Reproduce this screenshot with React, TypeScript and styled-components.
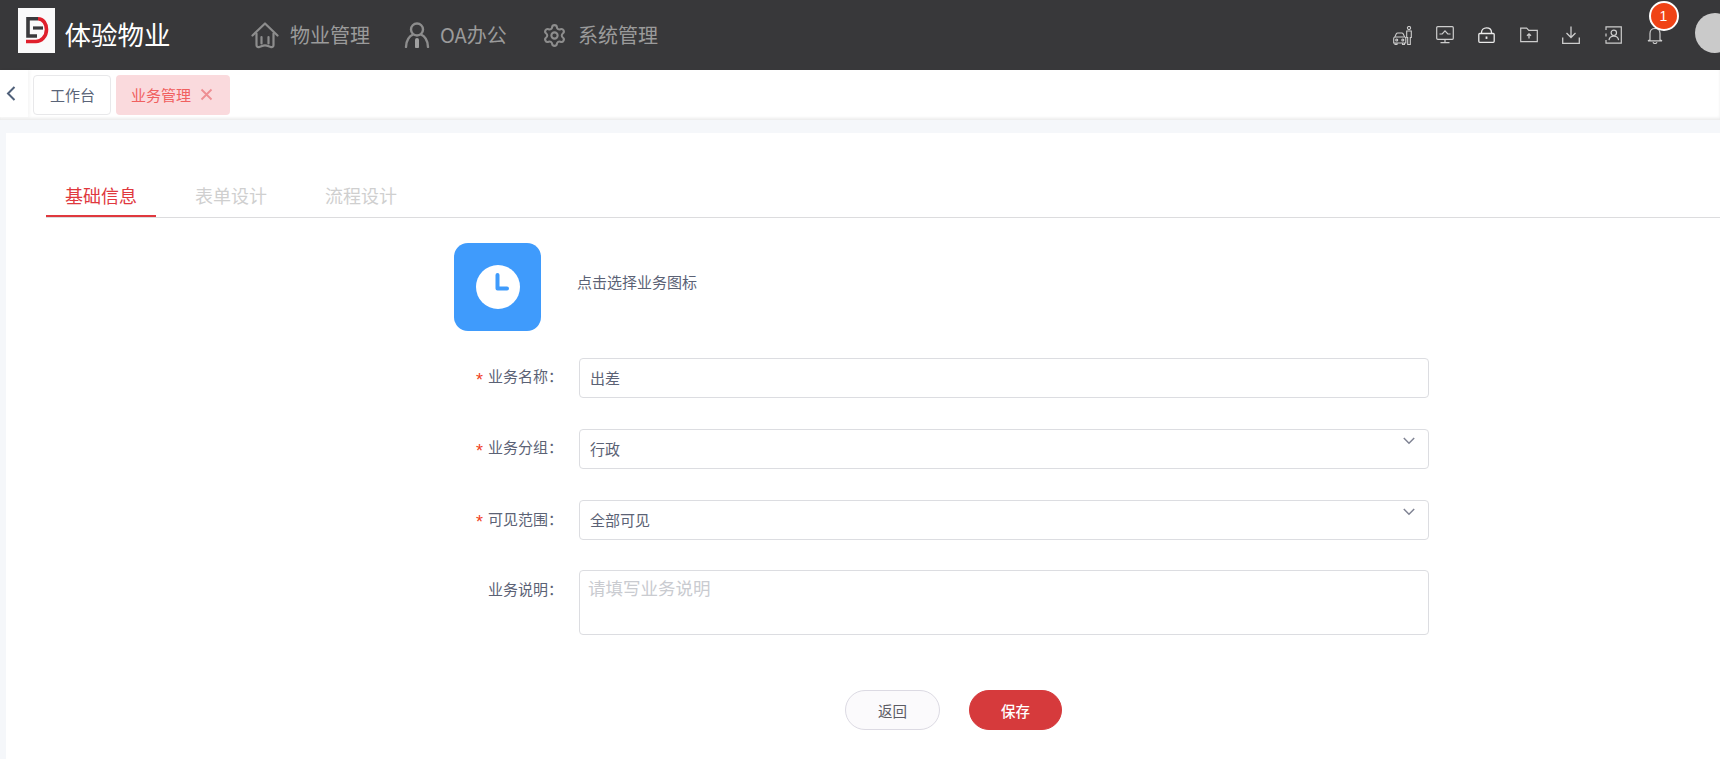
import React from "react";
import styled, { createGlobalStyle } from "styled-components";
import { Settings } from "lucide-react";

const Global = createGlobalStyle`
  html, body { margin: 0; padding: 0; height: 759px; overflow: hidden; background: #f5f7fa; }
  body, input, textarea { font-family: "Noto Sans CJK SC", "Liberation Sans", sans-serif; }
  * { box-sizing: border-box; }
`;

const Page = styled.div`
  display: flex;
  flex-direction: column;
  width: 1720px;
  height: 759px;
  overflow: hidden;
`;

const Header = styled.header`
  display: flex;
  align-items: center;
  flex: none;
  height: 70px;
  padding-left: 18px;
  background: #38383a;
`;

const LogoBox = styled.div`
  display: flex;
  flex: none;
  width: 37px;
  height: 45px;
  margin-top: -9px;
  background: #fafafa;
`;

const Title = styled.div`
  width: 186.5px;
  margin: -3px 0 0 9.5px;
  flex: none;
  color: #fff;
  font-size: 26.5px;
  line-height: 36px;
`;

const Nav = styled.nav`
  display: flex;
  align-items: center;
`;

const NavItem = styled.div<{ $w: number; $gap: number }>`
  display: flex;
  align-items: center;
  gap: ${(p) => p.$gap}px;
  width: ${(p) => p.$w}px;
  color: #9b9b9b;
  font-size: 20px;
  line-height: 28px;
`;

const Tools = styled.div`
  display: flex;
  align-items: center;
  margin-left: auto;
  margin-right: -15px;
`;

const ToolCell = styled.div`
  position: relative;
  display: flex;
  justify-content: center;
  align-items: center;
  width: 42px;
  height: 42px;
  color: #cdcdcd;
`;

const Badge = styled.span`
  position: absolute;
  left: 15px;
  top: -13px;
  display: flex;
  align-items: center;
  justify-content: center;
  width: 30px;
  height: 30px;
  border: 2px solid #fff;
  border-radius: 50%;
  background: #f04316;
  color: #fff;
  font-family: "Liberation Sans", sans-serif;
  font-size: 14px;
`;

const Avatar = styled.div`
  flex: none;
  width: 40px;
  height: 40px;
  margin-left: 19.5px;
  margin-top: -4px;
  border-radius: 50%;
  background: #cacaca;
`;

const TabBar = styled.div`
  position: relative;
  display: flex;
  align-items: center;
  flex: none;
  gap: 5px;
  height: 50px;
  background: #fff;
  box-shadow: 0 -2px 3px rgba(0, 0, 0, 0.08) inset;
`;

const BackCell = styled.div`
  display: flex;
  align-items: center;
  justify-content: center;
  width: 28px;
  height: 47px;
  margin-top: -3px;
  padding-right: 6px;
  background: #fff;
  box-shadow: 2px 0 3px rgba(0, 0, 0, 0.04);
`;

const PageTab = styled.div<{ $active?: boolean }>`
  display: flex;
  align-items: center;
  gap: 9px;
  height: 40px;
  padding: 0 0 2px ${(p) => (p.$active ? "15px" : "16px")};
  border: ${(p) => (p.$active ? "none" : "1px solid #e8e8ea")};
  border-radius: 4px;
  background: ${(p) => (p.$active ? "#fadadd" : "#fff")};
  color: ${(p) => (p.$active ? "#f0605f" : "#5a6478")};
  font-size: 15px;
  white-space: nowrap;
  width: ${(p) => (p.$active ? "114px" : "78px")};
`;

const Card = styled.main`
  flex: 1;
  margin: 13px 0 0 6px;
  padding: 42px 0 0 40px;
  background: #fff;
`;

const SectionTabs = styled.div`
  display: flex;
  gap: 20px;
  border-bottom: 1px solid #dcdcde;
  height: 43px;
`;

const SectionTab = styled.div<{ $active?: boolean }>`
  display: flex;
  align-items: center;
  justify-content: center;
  width: 110px;
  height: 42px;
  border-bottom: 2px solid ${(p) => (p.$active ? "#e0383e" : "transparent")};
  color: ${(p) => (p.$active ? "#e0383e" : "#cfcfcf")};
  font-size: 18px;
`;

const Form = styled.form`
  display: flex;
  flex-direction: column;
  width: 975px;
  margin: 25px 0 0 408px;
`;

const IconRow = styled.div`
  display: flex;
  align-items: center;
  margin-bottom: 27px;
`;

const AppIcon = styled.div`
  display: flex;
  align-items: center;
  justify-content: center;
  width: 87px;
  height: 88px;
  border-radius: 14px;
  background: #3f9bfc;
`;

const IconHint = styled.div`
  margin: -12px 0 0 36px;
  color: #5b6275;
  font-size: 15px;
`;

const Row = styled.div<{ $gap: number }>`
  display: flex;
  align-items: flex-start;
  margin-bottom: ${(p) => p.$gap}px;
`;

const Label = styled.label<{ $h?: number }>`
  display: flex;
  justify-content: flex-end;
  align-items: center;
  flex: none;
  width: 109px;
  height: ${(p) => p.$h ?? 35}px;
  margin-right: 16px;
  color: #5b6275;
  font-size: 15px;
`;

const Star = styled.span`
  margin-right: 5px;
  color: #f0411d;
  font-size: 18px;
  font-family: "Liberation Sans", sans-serif;
  line-height: 14px;
  padding-top: 8px;
`;

const TextInput = styled.input`
  flex: 1;
  height: 40px;
  padding: 0 10px 2px;
  border: 1px solid #dcdde1;
  border-radius: 4px;
  outline: none;
  background: #fff;
  color: #5b6275;
  font-size: 15px;
`;

const SelectBox = styled.div`
  display: flex;
  justify-content: space-between;
  align-items: flex-start;
  flex: 1;
  height: 40px;
  padding: 0 13px 0 10px;
  border: 1px solid #dcdde1;
  border-radius: 4px;
  color: #5b6275;
  font-size: 15px;
  line-height: 37px;
`;

const Caret = styled.svg`
  margin-top: 7px;
`;

const TextArea = styled.textarea`
  flex: 1;
  height: 65px;
  padding: 5px 8px;
  border: 1px solid #dcdde1;
  border-radius: 4px;
  outline: none;
  resize: none;
  color: #5b6275;
  font-size: 17.5px;
  line-height: 24px;
  &::placeholder {
    color: #c9cbd0;
    opacity: 1;
  }
`;

const Actions = styled.div`
  display: flex;
  gap: 29px;
  margin: 24px 0 0 391px;
`;

const Button = styled.button<{ $primary?: boolean }>`
  width: ${(p) => (p.$primary ? "93px" : "95px")};
  height: 40px;
  border: 1px solid ${(p) => (p.$primary ? "#d63a3c" : "#dcdae3")};
  border-radius: 20px;
  background: ${(p) => (p.$primary ? "#d63a3c" : "#fbfafc")};
  color: ${(p) => (p.$primary ? "#fff" : "#5c5c64")};
  font-family: inherit;
  font-size: 14.5px;
  font-weight: ${(p) => (p.$primary ? 500 : 400)};
`;

const LogoMark = () => (
  <svg width="37" height="45" viewBox="0 0 37 45" fill="none">
    <path d="M20 10.800H10V28H19" stroke="#3a3a3c" strokeWidth="3.600" />
    <path d="M15 20H25" stroke="#3a3a3c" strokeWidth="3.200" />
    <path d="M20 10.800C25.500 10.800 28.500 16 28.500 21.500C28.500 29 23 33.500 18 33.500H8" stroke="#e0202c" strokeWidth="3.600" />
  </svg>
);

const HomeIcon = () => (
  <svg width="28" height="27" viewBox="0 0 28 27" fill="none" stroke="#8d8d8d" strokeWidth="2.2" strokeLinecap="round" strokeLinejoin="round">
    <path d="M1.5 13.5 14 1.5l12.5 12" />
    <path d="M5.5 11.5v11.5c0 1.6 1 2.4 2.4 2.1 2.4-.5 3.4-1.8 6.1-1.8s3.7 1.3 6.1 1.8c1.4.3 2.4-.5 2.4-2.1V11.5" />
    <path d="M10.5 15v6.5M17.5 15v6.5" />
  </svg>
);

const UserIcon = () => (
  <svg width="26" height="26" viewBox="0 0 26 26" fill="none" stroke="#8d8d8d" strokeWidth="2.4" strokeLinecap="round">
    <circle cx="13" cy="7.5" r="6" />
    <path d="M2 25c0-7 4-11.5 6.5-12.2M24 25c0-7-4-11.5-6.5-12.2" />
    <path d="M13 18v6.5" strokeWidth="4" stroke="#a0a0a0" />
  </svg>
);

const CarPersonIcon = () => (
  <svg width="20" height="19" viewBox="0 0 20 19" fill="none" stroke="currentColor" strokeWidth="1.1">
    <circle cx="16" cy="2" r="1.6" />
    <path d="M13.7 5h4.600v6.500h-1V18.500h-2.600V11.500h-1z" />
    <path d="M.7 17v-4.500c0-1 .6-1.500 1.300-1.800L3.200 8c.3-.6.800-1 1.500-1h4.100c.7 0 1.200.4 1.500 1l1.200 2.700c.7.300 1.300.8 1.300 1.800V17z" />
    <path d="M2 11h9.500M2 17v1.500h2V17M9.500 17v1.500h2V17" />
    <circle cx="3.700" cy="14" r="1" />
    <circle cx="9.800" cy="14" r="1" />
  </svg>
);

const MonitorIcon = () => (
  <svg width="18" height="18" viewBox="0 0 18 18" fill="none" stroke="currentColor" strokeWidth="1.2">
    <rect x=".7" y=".7" width="16.6" height="12.6" rx="1" />
    <path d="M3.5 8H6.2L9 4.8 11.8 8h2.7M9 13.5V16.5M4.5 16.7h9" />
  </svg>
);

const LockIcon = () => (
  <svg width="17" height="16" viewBox="0 0 17 16" fill="none" stroke="#eaeaea" strokeWidth="1.3">
    <rect x=".8" y="6.5" width="15.4" height="8.8" rx="1" />
    <path d="M3.5 6.5V5.5C3.5 2.8 5.5.8 8.5.8s5 2 5 4.7v1" />
    <path d="M8.5 9.5v2.4" strokeWidth="1.8" />
  </svg>
);

const FolderIcon = () => (
  <svg width="18" height="16" viewBox="0 0 18 16" fill="none" stroke="currentColor" strokeWidth="1.2">
    <path d="M.7 14.6V1.2h6L8.8 3.4h8.5v11.2z" />
    <path d="M9 11.5V7M7 8.8 9 6.8l2 2" strokeWidth="1.3" />
  </svg>
);

const DownloadIcon = () => (
  <svg width="18" height="18" viewBox="0 0 18 18" fill="none" stroke="currentColor" strokeWidth="1.3">
    <path d="M9 .5V11.5M4.5 7 9 11.5 13.5 7" />
    <path d="M.7 11.5v5.8h16.6v-5.8" />
  </svg>
);

const ContactIcon = () => (
  <svg width="18" height="18" viewBox="0 0 18 18" fill="none" stroke="currentColor" strokeWidth="1.2">
    <path d="M2 4V.8h15.3v16.4H2V14M2 7.5v3" />
    <circle cx="9.8" cy="6.8" r="2.7" />
    <path d="M5 14.2c.4-2.8 2.4-4 4.8-4s4.400 1.200 4.800 4" />
  </svg>
);

const BellIcon = () => (
  <svg width="16" height="17" viewBox="0 0 16 17" fill="none" stroke="currentColor" strokeWidth="1.2">
    <path d="M3 12.800V6.500C3 3.500 5 1.500 8 1.500s5 2 5 5v6.300l2 1H1z" />
    <path d="M6 15.200c.4 1 1 1.300 2 1.300s1.600-.3 2-1.300" />
  </svg>
);

const BackIcon = () => (
  <svg width="10" height="15" viewBox="0 0 10 15" fill="none" stroke="#4f6079" strokeWidth="2">
    <path d="M8.500 1 2 7.500 8.500 14" />
  </svg>
);

const CloseIcon = () => (
  <svg width="13" height="13" viewBox="0 0 13 13" fill="none" stroke="#ee8f93" strokeWidth="1.800">
    <path d="M1.500 1.500 11.500 11.500M11.500 1.500 1.500 11.500" />
  </svg>
);

const ClockIcon = () => (
  <svg width="44" height="44" viewBox="0 0 44 44">
    <circle cx="22" cy="22" r="22" fill="#fff" />
    <path d="M21.500 10V23.500H31" fill="none" stroke="#3f9bfc" strokeWidth="4" strokeLinecap="round" strokeLinejoin="round" />
  </svg>
);

const Chevron = () => (
  <Caret width="12" height="8" viewBox="0 0 12 8" fill="none" stroke="#7f8393" strokeWidth="1.500">
    <path d="M.8 1 6 6.200 11.200 1" />
  </Caret>
);

export default function App() {
  return (
    <Page>
      <Global />
      <Header>
        <LogoBox>
          <LogoMark />
        </LogoBox>
        <Title>体验物业</Title>
        <Nav>
          <NavItem $w={153} $gap={11}>
            <HomeIcon />
            物业管理
          </NavItem>
          <NavItem $w={138} $gap={10}>
            <UserIcon />
            OA办公
          </NavItem>
          <NavItem $w={125} $gap={11}>
            <Settings size={25} color="#8d8d8d" strokeWidth={2} />
            系统管理
          </NavItem>
        </Nav>
        <Tools>
          <ToolCell><CarPersonIcon /></ToolCell>
          <ToolCell><MonitorIcon /></ToolCell>
          <ToolCell><LockIcon /></ToolCell>
          <ToolCell><FolderIcon /></ToolCell>
          <ToolCell><DownloadIcon /></ToolCell>
          <ToolCell><ContactIcon /></ToolCell>
          <ToolCell>
            <BellIcon />
            <Badge>1</Badge>
          </ToolCell>
          <Avatar />
        </Tools>
      </Header>
      <TabBar>
        <BackCell><BackIcon /></BackCell>
        <PageTab>工作台</PageTab>
        <PageTab $active>
          业务管理
          <CloseIcon />
        </PageTab>
      </TabBar>
      <Card>
        <SectionTabs>
          <SectionTab $active>基础信息</SectionTab>
          <SectionTab>表单设计</SectionTab>
          <SectionTab>流程设计</SectionTab>
        </SectionTabs>
        <Form>
          <IconRow>
            <AppIcon><ClockIcon /></AppIcon>
            <IconHint>点击选择业务图标</IconHint>
          </IconRow>
          <Row $gap={31}>
            <Label><Star>*</Star>业务名称：</Label>
            <TextInput value="出差" readOnly />
          </Row>
          <Row $gap={31}>
            <Label><Star>*</Star>业务分组：</Label>
            <SelectBox>行政<Chevron /></SelectBox>
          </Row>
          <Row $gap={30}>
            <Label $h={36}><Star>*</Star>可见范围：</Label>
            <SelectBox>全部可见<Chevron /></SelectBox>
          </Row>
          <Row $gap={31}>
            <Label $h={37}>业务说明：</Label>
            <TextArea placeholder="请填写业务说明" />
          </Row>
          <Actions>
            <Button type="button">返回</Button>
            <Button type="button" $primary>保存</Button>
          </Actions>
        </Form>
      </Card>
    </Page>
  );
}
